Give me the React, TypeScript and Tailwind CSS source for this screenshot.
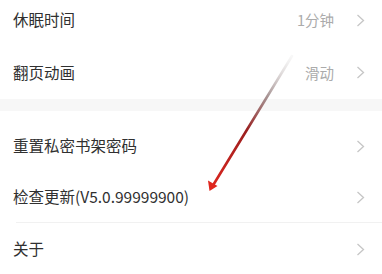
import type { ReactNode } from "react";

type RowProps = {
  label: string;
  value?: string;
  className?: string;
};

function Chevron() {
  return (
    <svg width="9" height="13" viewBox="0 0 9 13" className="shrink-0">
      <polyline points="1.5,1 7.5,6.5 1.5,12" fill="none" stroke="#c6c6c6" strokeWidth="1.3" />
    </svg>
  );
}

function Row({ label, value, className = "" }: RowProps) {
  return (
    <div className={`flex items-center pl-[13px] pr-[17px] ${className}`}>
      <span className="flex-1 text-[15.5px] text-[#303030]">{label}</span>
      {value ? <span className="mr-[22px] text-[14.5px] text-[#ababab]">{value}</span> : null}
      <Chevron />
    </div>
  );
}

function Arrow(): ReactNode {
  return (
    <svg className="pointer-events-none absolute inset-0" width="382" height="274" viewBox="0 0 382 274">
      <defs>
        <linearGradient id="arrowLine" x1="292" y1="56" x2="210" y2="190" gradientUnits="userSpaceOnUse">
          <stop offset="0" stopColor="#d0d0d0" stopOpacity="0.15" />
          <stop offset="0.3" stopColor="#8a7070" stopOpacity="0.75" />
          <stop offset="0.55" stopColor="#9a1f1f" />
          <stop offset="1" stopColor="#e0261e" />
        </linearGradient>
      </defs>
      <path d="M292 56 L212 187" stroke="url(#arrowLine)" strokeWidth="2.6" strokeLinecap="round" fill="none" />
      <path d="M209.5 191 L208 180.5 L217.5 186 Z" fill="#e0261e" />
    </svg>
  );
}

export default function App() {
  return (
    <div className="relative h-[274px] w-[382px] overflow-hidden bg-white font-['Noto_Sans_CJK_SC','Noto_Sans',sans-serif]">
      <Row label="休眠时间" value="1分钟" className="h-[46px] pb-[6px]" />
      <Row label="翻页动画" value="滑动" className="h-[53px]" />
      <div className="h-[12px] bg-[#f7f7f7]" />
      <Row label="重置私密书架密码" className="h-[61px] pt-[9px]" />
      <Row label="检查更新(V5.0.99999900)" className="h-[50px]" />
      <div className="ml-4 h-px bg-[#f1f1f1]" />
      <Row label="关于" className="h-[52px]" />
      <Arrow />
    </div>
  );
}
